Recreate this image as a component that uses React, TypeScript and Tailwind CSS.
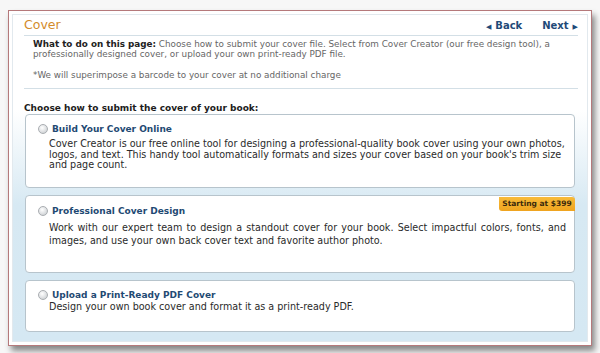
import React from 'react'

// ---------------------------------------------------------------------------
// Radio
// ---------------------------------------------------------------------------

function Radio() {
  return (
    <span className="inline-block h-[10px] w-[10px] shrink-0 rounded-full border border-[#a9adb1] bg-[radial-gradient(circle_at_40%_35%,#ffffff_0%,#e4e6e8_45%,#c3c7cb_100%)]" />
  )
}

// ---------------------------------------------------------------------------
// Option card
// ---------------------------------------------------------------------------

function OptionCard({
  title,
  height,
  padTop,
  bodyClass,
  badge,
  children,
}: {
  title: string
  height: string
  padTop: string
  bodyClass: string
  badge?: string
  children: React.ReactNode
}) {
  return (
    <div
      className={`relative rounded-[4px] border border-[#b7c4cc] bg-white ${height} ${padTop}`}
    >
      {badge && (
        <div className="absolute right-[-1px] top-[1px] flex h-[14px] w-[76px] items-center justify-center rounded-bl-[3px] rounded-tr-[3px] bg-[linear-gradient(to_bottom,#f8bb3a,#efa41f)] text-[7.5px] font-bold text-[#3b2a0c]">
          {badge}
        </div>
      )}
      <div className="flex h-[12px] items-center pl-[12px]">
        <Radio />
        <span className="ml-[4px] text-[9px] font-bold leading-[12px] text-[#1f4a73]">
          {title}
        </span>
      </div>
      <p className={`pl-[23px] pr-[8px] text-[9.6px] text-[#2a2a2a] ${bodyClass}`}>
        {children}
      </p>
    </div>
  )
}

// ---------------------------------------------------------------------------
// App
// ---------------------------------------------------------------------------

export default function App() {
  return (
    <div className="h-[353px] w-[600px] overflow-hidden bg-[#f7f7f7] pl-[8px] pt-[10px] font-['DejaVu_Sans',sans-serif]">
      <div className="h-[336px] w-[584px] border border-[#b5797b] bg-white p-[3px] shadow-[3px_5px_6px_rgba(0,0,0,0.45)]">
        <div className="h-full border border-[#e2e9ee] bg-[linear-gradient(to_bottom,#ffffff_0px,#ffffff_95px,#d7e9f3_190px,#d5e8f3_100%)]">
          {/* Header */}
          <div className="ml-[11px] mr-[9px] flex h-[21px] items-center justify-between border-b border-[#d3dfe6]">
            <span className="text-[12.5px] leading-none text-[#d38b2a]">Cover</span>
            <div className="flex items-center gap-[20px] text-[10px] font-bold text-[#1f4a78]">
              <span>
                <span className="mr-[4px] text-[7px]">◀</span>Back
              </span>
              <span>
                Next<span className="ml-[4px] text-[7px]">▶</span>
              </span>
            </div>
          </div>

          {/* Instructions */}
          <div className="ml-[11px] mr-[9px] border-b border-[#d3dfe6] pb-[8px] pl-[9px] pt-[3px] text-[8.8px] leading-[10px] text-[#666]">
            <p>
              <span className="font-bold text-[#222]">What to do on this page:</span> Choose
              how to submit your cover file. Select from Cover Creator (our free design
              tool), a professionally designed cover, or upload your own print-ready PDF
              file.
            </p>
            <p className="mt-[11px]">
              *We will superimpose a barcode to your cover at no additional charge
            </p>
          </div>

          <h2 className="ml-[11px] pt-[13px] text-[9px] font-bold leading-[12px] text-[#1c1c1c]">
            Choose how to submit the cover of your book:
          </h2>

          {/* Options */}
          <div className="flex flex-col gap-[7px] px-[12px]">
            <OptionCard
              title="Build Your Cover Online"
              height="h-[74px]"
              padTop="pt-[8px]"
              bodyClass="mt-[4px] leading-[10.5px]"
            >
              Cover Creator is our free online tool for designing a professional-quality
              book cover using your own photos, logos, and text. This handy tool
              automatically formats and sizes your cover based on your book&apos;s trim
              size and page count.
            </OptionCard>
            <OptionCard
              title="Professional Cover Design"
              height="h-[78px]"
              padTop="pt-[9px]"
              bodyClass="mt-[4px] text-justify leading-[13px]"
              badge="Starting at $399"
            >
              Work with our expert team to design a standout cover for your book. Select
              impactful colors, fonts, and images, and use your own back cover text and
              favorite author photo.
            </OptionCard>
            <OptionCard
              title="Upload a Print-Ready PDF Cover"
              height="h-[52px]"
              padTop="pt-[8px]"
              bodyClass="mt-0 leading-[11px]"
            >
              Design your own book cover and format it as a print-ready PDF.
            </OptionCard>
          </div>
        </div>
      </div>
    </div>
  )
}
